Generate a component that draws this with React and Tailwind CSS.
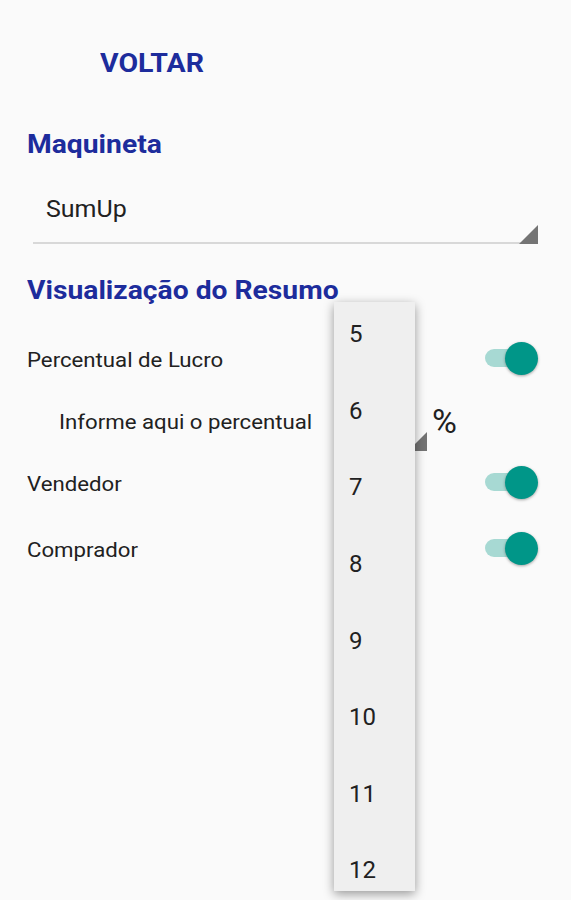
import React from "react";

function Toggle() {
  return (
    <div className="relative w-[54px] h-[34px] -mt-1 flex items-center">
      <div className="absolute left-[1px] w-[46px] h-[18px] rounded-full bg-[#a7d9d3]" />
      <div className="absolute right-0 w-[33px] h-[33px] rounded-full bg-[#009688] shadow-[0_1px_3px_rgba(0,0,0,0.35)]" />
    </div>
  );
}

function Tri({ size = 19 }) {
  return (
    <svg width={size} height={size} viewBox="0 0 19 19" className="block">
      <polygon points="19,0 19,19 0,19" fill="#747474" />
    </svg>
  );
}

export default function App() {
  const items = [5, 6, 7, 8, 9, 10, 11, 12];
  return (
    <div
      className="relative w-[571px] h-[900px] overflow-hidden bg-[#fafafa] text-[#212121]"
      style={{ fontFamily: "Roboto, 'Liberation Sans', sans-serif" }}
    >
      <div className="pt-[49px]">
        <div className="pl-[100px] text-[25px] leading-[30px] font-bold text-[#1d2c9c]">
          <span className="inline-block origin-left scale-x-[1.14]">VOLTAR</span>
        </div>
        <div className="mt-[51px] pl-[27px] text-[25px] leading-[30px] font-bold text-[#1d2c9c]">
          <span className="inline-block origin-left scale-x-[1.13]">Maquineta</span>
        </div>
        <div className="mt-[34px] mx-[33px] relative">
          <div className="pl-[13px] text-[24px] leading-[30px] pb-[18px]">
            <span className="inline-block origin-left scale-x-[1.04]">SumUp</span>
          </div>
          <div className="h-[2px] bg-[#d8d8d8]" />
          <div className="absolute right-0 bottom-0">
            <Tri />
          </div>
        </div>
        <div className="mt-[32px] pl-[27px] text-[25px] leading-[30px] font-bold text-[#1d2c9c]">
          <span className="inline-block origin-left scale-x-[1.13]">Visualização do Resumo</span>
        </div>
        <div className="mt-[23px]">
          <div className="h-[62px] flex items-center justify-between pl-[27px] pr-[33px]">
            <span className="inline-block origin-left scale-x-[1.11] text-[20px] leading-[24px]">Percentual de Lucro</span>
            <Toggle />
          </div>
          <div className="h-[62px] flex items-center pl-[59px]">
            <span className="w-[349px] text-[20px] leading-[24px]">
              <span className="inline-block origin-left scale-x-[1.11]">Informe aqui o percentual</span>
            </span>
            <div className="relative w-[19px] h-[62px]">
              <div className="absolute left-0 top-[41px]">
                <Tri />
              </div>
            </div>
            <span className="ml-[5px] -mt-[2px] text-[34px] leading-[38px]">%</span>
          </div>
          <div className="h-[62px] flex items-center justify-between pl-[27px] pr-[33px]">
            <span className="inline-block origin-left scale-x-[1.11] text-[20px] leading-[24px]">Vendedor</span>
            <Toggle />
          </div>
          <div className="mt-[4px] h-[62px] flex items-center justify-between pl-[27px] pr-[33px]">
            <span className="inline-block origin-left scale-x-[1.11] text-[20px] leading-[24px]">Comprador</span>
            <Toggle />
          </div>
        </div>
      </div>

      <div className="absolute left-[334px] top-[302px] w-[81px] h-[589px] bg-[#efefef] shadow-[0_3px_10px_rgba(0,0,0,0.4)] overflow-hidden">
        <div className="-mt-[6px]">
          {items.map((n) => (
            <div key={n} className="h-[76.6px] flex items-center pl-[15px] text-[24px] leading-[28px]">
              {n}
            </div>
          ))}
        </div>
      </div>
    </div>
  );
}
